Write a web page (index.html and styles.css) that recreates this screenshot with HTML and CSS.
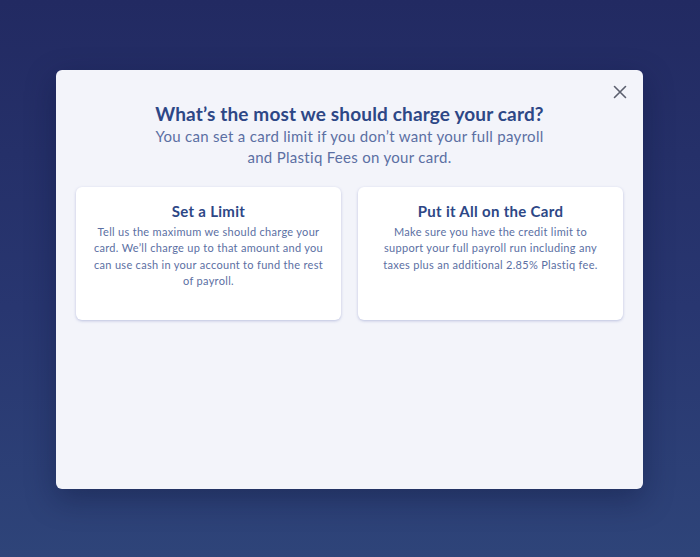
FILE: index.html
```html
<!DOCTYPE html>
<html>
<head>
<meta charset="utf-8">
<link rel="stylesheet" href="styles.css">
</head>
<body>
<div class="backdrop">
  <div class="modal">
    <button class="close" aria-label="Close">
      <svg width="14" height="14" viewBox="0 0 14 14"><path d="M1.5 1.5L12.5 12.5M12.5 1.5L1.5 12.5" stroke="#5b5f6e" stroke-width="1.6" stroke-linecap="round"/></svg>
    </button>
    <h1 class="title">What’s the most we should charge your card?</h1>
    <p class="subtitle">You can set a card limit if you don’t want your full payroll<br>and Plastiq Fees on your card.</p>
    <div class="options">
      <div class="card">
        <h2 class="card-title">Set a Limit</h2>
        <p class="card-text">Tell us the maximum we should charge your card. We’ll charge up to that amount and you can use cash in your account to fund the rest of payroll.</p>
      </div>
      <div class="card">
        <h2 class="card-title">Put it All on the Card</h2>
        <p class="card-text">Make sure you have the credit limit to support your full payroll run including any taxes plus an additional 2.85% Plastiq fee.</p>
      </div>
    </div>
  </div>
</div>
</body>
</html>
```
FILE: styles.css
```css
html, body {
  margin: 0;
  padding: 0;
  height: 100%;
}
body {
  font-family: "Lato", "Noto Sans", sans-serif;
  background: linear-gradient(180deg, #222a62 0%, #283670 55%, #2e4479 100%);
}
.backdrop {
  height: 557px;
  padding-top: 70px;
  box-sizing: border-box;
}
.modal {
  position: relative;
  margin-left: 56px;
  width: 587px;
  height: 419px;
  box-sizing: border-box;
  background: #f3f4fa;
  border-radius: 6px;
  padding: 32px 20px 0;
  box-shadow: 0 10px 30px rgba(10, 15, 50, 0.35);
}
.close {
  position: absolute;
  top: 15px;
  right: 16px;
  border: 0;
  background: none;
  padding: 0;
  width: 14px;
  height: 14px;
  cursor: pointer;
}
.close svg { display: block; }
.title {
  margin: 0;
  text-align: center;
  font-size: 19px;
  font-weight: 700;
  color: #2d4786;
  letter-spacing: 0.15px;
  line-height: 24px;
}
.subtitle {
  margin: 0;
  text-align: center;
  font-size: 15px;
  line-height: 21px;
  color: #5b6fa3;
  letter-spacing: 0.3px;
}
.options {
  display: grid;
  grid-template-columns: 1fr 1fr;
  gap: 17px;
  margin-top: 19px;
}
.card {
  background: #ffffff;
  border-radius: 6px;
  height: 133px;
  box-sizing: border-box;
  padding: 15px 16px 0;
  text-align: center;
  box-shadow: 0 1px 3px rgba(120, 130, 190, 0.45);
}
.card-title {
  margin: 0;
  font-size: 15px;
  font-weight: 700;
  color: #2d4786;
  line-height: 18px;
  letter-spacing: 0.3px;
}
.card-text {
  margin: 4px 0 0;
  font-size: 11px;
  line-height: 16.4px;
  color: #5b6fa3;
  letter-spacing: 0.3px;
}
```
